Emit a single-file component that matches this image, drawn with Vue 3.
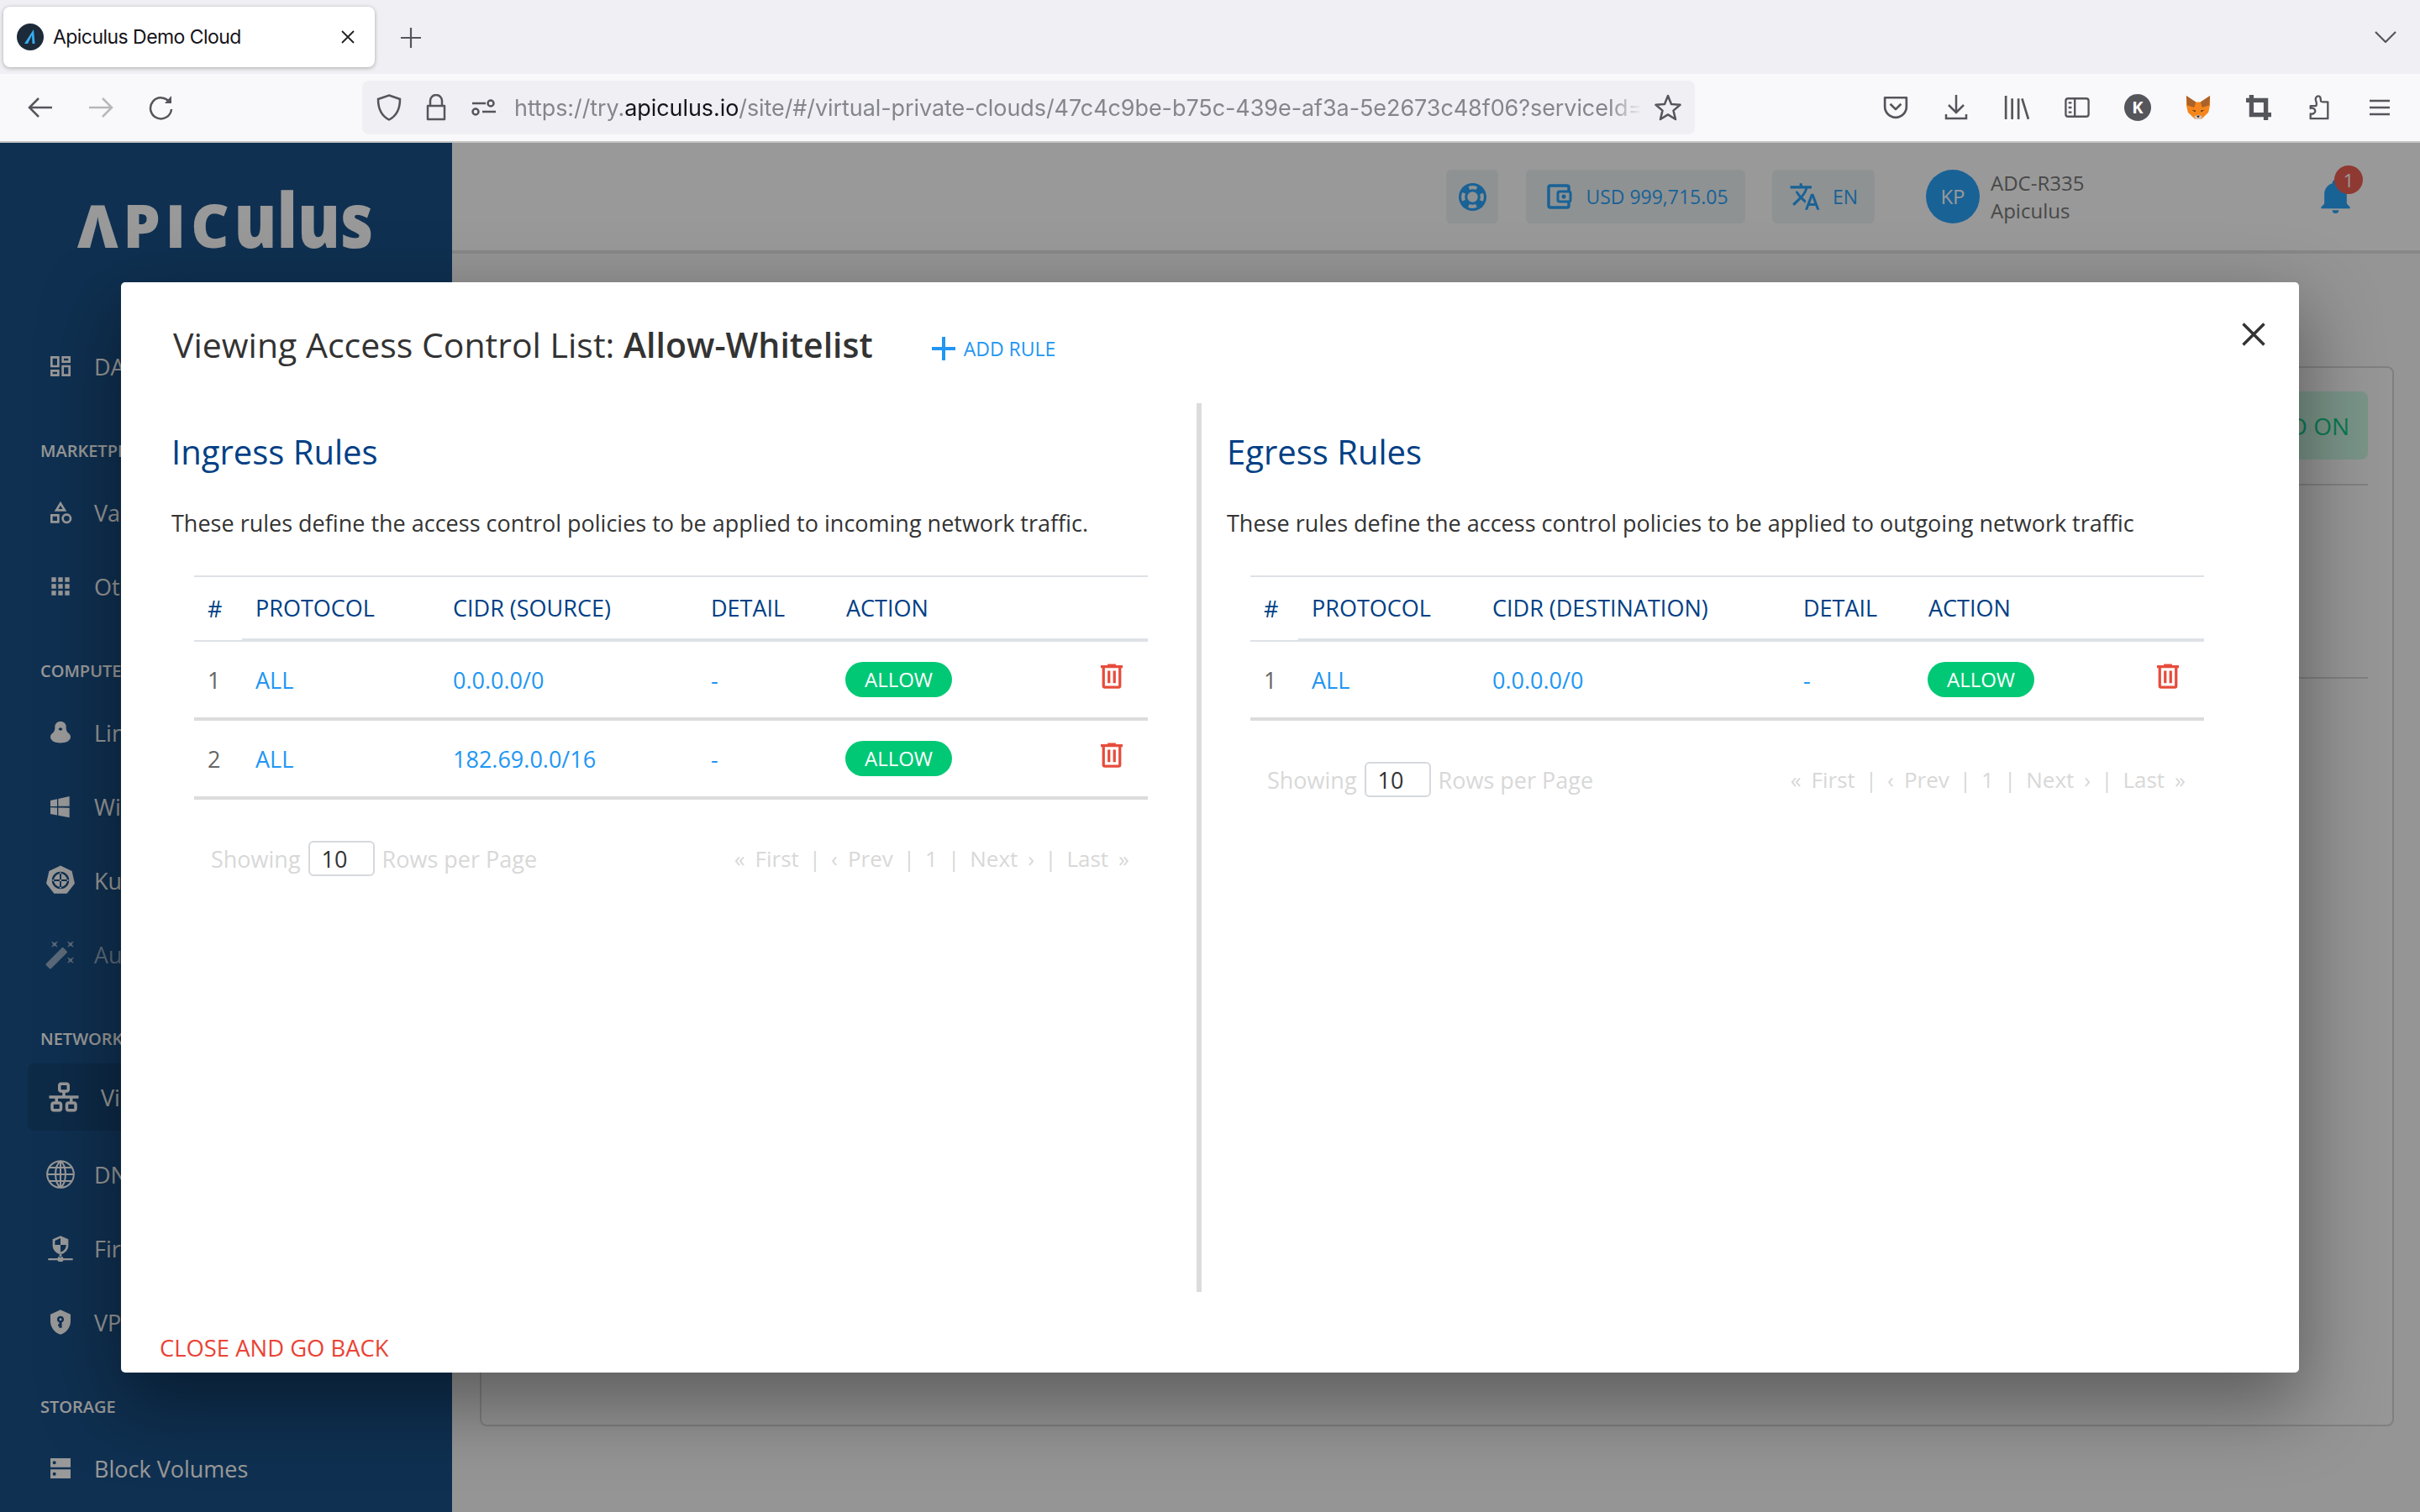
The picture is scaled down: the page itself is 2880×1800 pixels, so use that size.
<script setup>
const ic = {
  dash: 'M19,5V7H15V5H19M9,5V11H5V5H9M19,13V19H15V13H19M9,17V19H5V17H9M21,3H13V9H21V3M11,3H3V13H11V3M21,11H13V21H21V11M11,15H3V21H11V15Z',
  shape: 'M11,13.5V21.5H3V13.5H11M9,15.5H5V19.5H9V15.5M12,2L17.5,11H6.5L12,2M12,5.86L10.08,9H13.92L12,5.86M17.5,13C20,13 22,15 22,17.5C22,20 20,22 17.5,22C15,22 13,20 13,17.5C13,15 15,13 17.5,13M17.5,15A2.5,2.5 0 0,0 15,17.5A2.5,2.5 0 0,0 17.5,20A2.5,2.5 0 0,0 20,17.5A2.5,2.5 0 0,0 17.5,15Z',
  apps: 'M16,20H20V16H16M16,14H20V10H16M10,8H14V4H10M16,8H20V4H16M10,14H14V10H10M4,14H8V10H4M4,20H8V16H4M10,20H14V16H10M4,8H8V4H4V8Z',
  linux: 'M12,2A5,5 0 0,1 17,7V8C17,10 18,11.8 19.5,12.9C20.4,13.6 21,14.8 21,16C21,18 19,20 17.3,20.5C15.5,21.6 8.5,21.6 6.7,20.5C5,20 3,18 3,16C3,14.8 3.6,13.6 4.5,12.9C6,11.8 7,10 7,8V7A5,5 0 0,1 12,2M10,9L12,10.5L14,9L12,7.5L10,9Z',
  windows: 'M3,12V6.75L9,5.43V11.91L3,12M20,3V11.75L10,11.9V5.21L20,3M3,13L9,13.09V19.9L3,18.75V13M20,13.25V22L10,20.09V13.1L20,13.25Z',
  kube: 'M12,1L20.6,5.1L22.7,14.4L16.8,21.9H7.2L1.3,14.4L3.4,5.1L12,1ZM12,5.5A6.5,6.5 0 1,0 12.01,5.5ZM12,7A5,5 0 0,1 17,12A5,5 0 0,1 7,12A5,5 0 0,1 12,7ZM11.4,6V18H12.6V6ZM6,11.4V12.6H18V11.4Z',
  wand: 'M7.5,5.6L5,7L6.4,4.5L5,2L7.5,3.4L10,2L8.6,4.5L10,7L7.5,5.6M19.5,15.4L22,14L20.6,16.5L22,19L19.5,17.6L17,19L18.4,16.5L17,14L19.5,15.4M22,2L20.6,4.5L22,7L19.5,5.6L17,7L18.4,4.5L17,2L19.5,3.4L22,2M14.37,7.29L16.71,9.63C17.1,10 17.1,10.65 16.71,11.04L5.04,22.71C4.65,23.1 4,23.1 3.63,22.71L1.29,20.37C0.9,20 0.9,19.35 1.29,18.96L12.96,7.29C13.35,6.9 14,6.9 14.37,7.29Z',
  lan: 'M10,2C8.89,2 8,2.89 8,4V7C8,8.11 8.89,9 10,9H11V11H2V13H6V15H5C3.89,15 3,15.89 3,17V20C3,21.11 3.89,22 5,22H9C10.11,22 11,21.11 11,20V17C11,15.89 10.11,15 9,15H8V13H16V15H15C13.89,15 13,15.89 13,17V20C13,21.11 13.89,22 15,22H19C20.11,22 21,21.11 21,20V17C21,15.89 20.11,15 19,15H18V13H22V11H13V9H14C15.11,9 16,8.11 16,7V4C16,2.89 15.11,2 14,2H10M10,4H14V7H10V4M5,17H9V20H5V17M15,17H19V20H15V17Z',
  globe: 'M12,2A10,10 0 1,0 12,22A10,10 0 1,0 12,2ZM12,2C7,6 7,18 12,22C17,18 17,6 12,2ZM12,2V22M2,12H22M3.5,7H20.5M3.5,17H20.5',
  firewall: 'M12,1L5,4V9.5C5,13.5 8,16.5 12,17.5C16,16.5 19,13.5 19,9.5V4L12,1ZM12,3V9H17V9.5C17,12 15,14.6 12,15.4V9H7V5.3L12,3ZM11,17H13V20H11ZM1,21H9.5A2.5,1.6 0 0,1 14.5,21H23V22.6H14.5A2.5,1.6 0 0,1 9.5,22.6H1Z',
  vpn: 'M12,1L3,5V11C3,16.5 6.8,21.7 12,23C17.2,21.7 21,16.5 21,11V5L12,1ZM12,6.5A3,3 0 0,1 13.2,12.25V17H10.8V15.5H9.8V13.8H10.8V12.25A3,3 0 0,1 12,6.5ZM12,8.4A1.1,1.1 0 1,0 12.01,8.4Z',
  server: 'M3,3H21V11H3ZM6.5,5.5A1.5,1.5 0 1,0 6.51,5.5ZM3,13H21V21H3ZM6.5,15.5A1.5,1.5 0 1,0 6.51,15.5Z'
}

const sideGroups = [
  { items: [{ name: 'DASHBOARD', icon: ic.dash }] },
  { label: 'MARKETPLACE', items: [{ name: 'Value Packs', icon: ic.shape }, { name: 'Others', icon: ic.apps }] },
  { label: 'COMPUTE', items: [{ name: 'Linux', icon: ic.linux }, { name: 'Windows', icon: ic.windows }, { name: 'Kubernetes', icon: ic.kube, big: true }, { name: 'Autoscale', icon: ic.wand, dim: true, big: true }] },
  { label: 'NETWORK', items: [{ name: 'Virtual Private Clouds', icon: ic.lan, active: true }, { name: 'DNS', icon: ic.globe, stroke: true, big: true }, { name: 'Firewall', icon: ic.firewall }, { name: 'VPN', icon: ic.vpn }] },
  { label: 'STORAGE', items: [{ name: 'Block Volumes', icon: ic.server }] }
]

const panels = [
  {
    title: 'Ingress Rules',
    text: 'These rules define the access control policies to be applied to incoming network traffic.',
    cidr: 'CIDR (SOURCE)',
    cols: [57, 235, 307, 161, 295, 80],
    rows: [
      { n: 1, cidr: '0.0.0.0/0' },
      { n: 2, cidr: '182.69.0.0/16' }
    ]
  },
  {
    title: 'Egress Rules',
    text: 'These rules define the access control policies to be applied to outgoing network traffic',
    cidr: 'CIDR (DESTINATION)',
    cols: [57, 215, 370, 149, 264, 80],
    rows: [{ n: 1, cidr: '0.0.0.0/0' }]
  }
]

const pager = ['«', 'First', '|', '‹', 'Prev', '|', '1', '|', 'Next', '›', '|', 'Last', '»']
</script>

<template>
  <div class="screen">
    <!-- browser chrome -->
    <div class="tabbar">
      <div class="tab">
        <svg class="favicon" viewBox="0 0 32 32">
          <circle cx="16" cy="16" r="16" fill="#1d2a3a" />
          <path d="M9 24L20 7L21.5 24H18.500L18 14L13 24Z" fill="#36aef0" />
        </svg>
        <span class="tab-title">Apiculus Demo Cloud</span>
        <svg class="tab-x" viewBox="0 0 16 16"><path d="M1 1L15 15M15 1L1 15" stroke="#222" stroke-width="1.8" /></svg>
      </div>
      <svg class="newtab" viewBox="0 0 24 24"><path d="M12 0V24M0 12H24" stroke="#55555c" stroke-width="2.2" /></svg>
      <svg class="tabs-chevron" viewBox="0 0 26 14"><path d="M1 1L13 13L25 1" fill="none" stroke="#55555c" stroke-width="2.2" /></svg>
    </div>

    <div class="toolbar">
      <div class="tool">
        <svg viewBox="0 0 30 26"><path d="M29 13H3M13 2L2 13L13 24" class="tl" /></svg>
      </div>
      <div class="tool faded">
        <svg viewBox="0 0 30 26"><path d="M1 13H27M17 2L28 13L17 24" class="tl" /></svg>
      </div>
      <div class="tool">
        <svg viewBox="0 0 30 30"><path d="M25 9A12.5 12.5 0 1 0 27 17" class="tl" /><path d="M19 10H27V1Z" fill="#55555c" /></svg>
      </div>

      <div class="urlbar">
        <svg class="u-shield" viewBox="0 0 30 32"><path d="M15 1.5L28 6C28 18 24 26 15 30.5C6 26 2 18 2 6Z" class="tl" /></svg>
        <svg class="u-lock" viewBox="0 0 24 32"><path d="M5 14V8A7 7 0 0 1 19 8V14M2 14H22V30H2Z" class="tl" stroke-linejoin="round" /></svg>
        <svg class="u-perm" viewBox="0 0 30 20"><path d="M1 5H17M13 15H29" class="tl" /><circle cx="23" cy="5" r="3.5" class="tl" /><circle cx="5" cy="15" r="3.5" class="tl" /></svg>
        <div class="url">https://try.<b>apiculus.io</b>/site/#/virtual-private-clouds/47c4c9be-b75c-439e-af3a-5e2673c48f06?serviceId=</div>
        <svg class="u-star" viewBox="0 0 32 32"><path d="M16 2L20 12L30.5 12.8L22.5 19.6L25 30L16 24.4L7 30L9.5 19.6L1.5 12.8L12 12Z" class="tl" stroke-linejoin="round" /></svg>
      </div>

      <div class="tools-right">
        <div class="tool"><svg viewBox="0 0 28 26"><path d="M2 2H26V12A12 12 0 0 1 2 12ZM8 9L14 15L20 9" class="tl" stroke-linejoin="round" /></svg></div>
        <div class="tool"><svg viewBox="0 0 28 30"><path d="M14 0V20M5 12L14 21L23 12M2 23V28H26V23" class="tl" /></svg></div>
        <div class="tool"><svg viewBox="0 0 28 28"><path d="M2 1V27M9 4V27M16 4V27M20 4L27 27" class="tl" /></svg></div>
        <div class="tool"><svg viewBox="0 0 32 26"><rect x="1.5" y="1.5" width="29" height="23" rx="3" class="tl" /><path d="M13 2V24M5 7H9M5 13H9M5 19H9" class="tl" /></svg></div>
        <div class="tool"><div class="k-badge">K</div></div>
        <div class="tool">
          <svg viewBox="0 0 32 32">
            <path d="M1 1L13 9H19L31 1L31 13L29 22L20 31H12L3 22L1 13Z" fill="#f6851b" />
            <path d="M1 1L13 9L11 16L2 13ZM31 1L19 9L21 16L30 13Z" fill="#a9622a" />
            <path d="M8 19L13 20L12 21.500ZM24 19L19 20L20 21.500Z" fill="#3a2a20" />
            <path d="M11 27L16 25L21 27L20 31H12Z" fill="#d7c1b3" />
            <path d="M14 26.500H18L16 29Z" fill="#161616" />
          </svg>
        </div>
        <div class="tool"><svg viewBox="0 0 28 28"><path d="M6 0V22H28M0 6H22V28" fill="none" stroke="#55555c" stroke-width="5" /></svg></div>
        <div class="tool"><svg viewBox="0 0 26 32"><path d="M2 14H8C10 14 10 10 9 8C7 4 10 1.500 12 1.500C15 1.500 15 5 15 7C15 9 16 9 18 9H24V30H2V24C5 25 8 23 8 20.500C8 18 5 16 2 17Z" class="tl" stroke-linejoin="round" /></svg></div>
        <div class="tool"><svg class="burger" viewBox="0 0 24 20"><path d="M0 2H24M0 10H24M0 18H24" class="tl" /></svg></div>
      </div>
    </div>

    <div class="app">
      <aside class="sidebar">
        <div class="logo"><span class="logo-caps">ΛPIC</span><span class="logo-low">ulus</span></div>
        <div v-for="g in sideGroups" :key="g.label || 'top'" class="side-group">
          <div v-if="g.label" class="side-label">{{ g.label }}</div>
          <div
            v-for="it in g.items"
            :key="it.name"
            class="side-item"
            :class="{ active: it.active, dim: it.dim, big: it.big }"
          >
            <svg class="side-icon" viewBox="0 0 24 24">
              <path v-if="it.stroke" :d="it.icon" fill="none" stroke="currentColor" stroke-width="1.3" />
              <path v-else :d="it.icon" fill="currentColor" fill-rule="evenodd" />
            </svg>
            <span>{{ it.name }}</span>
          </div>
        </div>
      </aside>

      <main class="main">
        <header class="topbar">
          <div class="chip chip-help">
            <svg viewBox="0 0 32 32" class="chip-svg">
              <circle cx="16" cy="16" r="16" fill="currentColor" />
              <circle cx="16" cy="16" r="11" fill="none" stroke="#eef3f5" stroke-width="4" stroke-dasharray="9 8.28" stroke-dashoffset="4.5" />
              <circle cx="16" cy="16" r="6" fill="#eef3f5" />
            </svg>
          </div>
          <div class="chip chip-bal">
            <svg viewBox="0 0 30 32" class="chip-wallet">
              <rect x="2" y="3" width="24" height="26" rx="2" fill="none" stroke="currentColor" stroke-width="3.500" />
              <rect x="13" y="10" width="15" height="12" rx="2" fill="#eef3f5" stroke="currentColor" stroke-width="3" />
              <circle cx="20" cy="16" r="2.500" fill="currentColor" />
            </svg>
            <span>USD 999,715.05</span>
          </div>
          <div class="chip chip-lang">
            <svg viewBox="0 0 24 24" class="chip-trans"><path fill="currentColor" d="M12.87,15.07L10.33,12.56L10.36,12.53C12.1,10.59 13.34,8.36 14.07,6H17V4H10V2H8V4H1V6H12.17C11.5,7.92 10.44,9.75 9,11.35C8.07,10.32 7.3,9.19 6.69,8H4.69C5.42,9.63 6.42,11.17 7.67,12.56L2.58,17.58L4,19L9,14L12.11,17.11L12.87,15.07M18.5,10H16.5L12,22H14L15.12,19H19.87L21,22H23L18.5,10M15.88,17L17.5,12.67L19.12,17H15.88Z" /></svg>
            <span>EN</span>
          </div>
          <div class="user">
            <div class="avatar">KP</div>
            <div class="user-text">
              <div>ADC-R335</div>
              <div>Apiculus</div>
            </div>
          </div>
          <div class="bell">
            <svg viewBox="3 2 18 21"><path fill="currentColor" d="M21,19V20H3V19L5,17V11C5,7.9 7.03,5.17 10,4.29C10,4.19 10,4.1 10,4A2,2 0 0,1 12,2A2,2 0 0,1 14,4C14,4.1 14,4.19 14,4.29C16.97,5.17 19,7.9 19,11V17L21,19M14,21A2,2 0 0,1 12,23A2,2 0 0,1 10,21" /></svg>
            <span class="bell-count">1</span>
          </div>
        </header>

        <section class="card">
          <div class="card-head">
            <button class="addon">ADD ON</button>
          </div>
          <div class="card-line"></div>
        </section>
      </main>
    </div>

    <!-- dialog -->
    <div class="backdrop">
      <div class="modal">
        <div class="modal-head">
          <h1 class="modal-title">Viewing Access Control List: <b>Allow-Whitelist</b></h1>
          <div class="add-rule">
            <svg viewBox="0 0 30 30"><path d="M15 1V29M1 15H29" stroke="currentColor" stroke-width="4" /></svg>
            <span>ADD RULE</span>
          </div>
        </div>
        <svg class="modal-x" viewBox="0 0 28 28"><path d="M1.500 1.500L26.500 26.500M26.500 1.500L1.500 26.500" stroke="#333" stroke-width="3.500" /></svg>

        <div class="panels">
          <section v-for="p in panels" :key="p.title" class="panel">
            <h2 class="panel-title">{{ p.title }}</h2>
            <p class="panel-text">{{ p.text }}</p>
            <table class="rules">
              <colgroup>
                <col v-for="(w, i) in p.cols" :key="i" :style="{ width: w + 'px' }" />
              </colgroup>
              <thead>
                <tr>
                  <th>#</th>
                  <th>PROTOCOL</th>
                  <th>{{ p.cidr }}</th>
                  <th>DETAIL</th>
                  <th>ACTION</th>
                  <th></th>
                </tr>
              </thead>
              <tbody>
                <tr v-for="r in p.rows" :key="r.n">
                  <td class="num">{{ r.n }}</td>
                  <td>ALL</td>
                  <td>{{ r.cidr }}</td>
                  <td>-</td>
                  <td><span class="badge">ALLOW</span></td>
                  <td class="del">
                    <svg viewBox="4 3 16 18"><path fill="#e74c3c" d="M9,3V4H4V6H5V19A2,2 0 0,0 7,21H17A2,2 0 0,0 19,19V6H20V4H15V3H9M7,6H17V19H7V6M9,8V17H11V8H9M13,8V17H15V8H13Z" /></svg>
                  </td>
                </tr>
              </tbody>
            </table>
            <div class="paging">
              <div class="per-page">
                <span>Showing</span>
                <span class="size-box">10</span>
                <span>Rows per Page</span>
              </div>
              <div class="pager">
                <span v-for="(t, i) in pager" :key="i">{{ t }}</span>
              </div>
            </div>
          </section>
        </div>

        <div class="modal-foot">CLOSE AND GO BACK</div>
      </div>
    </div>
  </div>
</template>

<style scoped>
.screen {
  position: relative;
  width: 2880px;
  height: 1800px;
  overflow: hidden;
  display: flex;
  flex-direction: column;
  font-family: "Open Sans", "Noto Sans", sans-serif;
  color: #333;
}

/* browser chrome */
.tabbar {
  height: 88px;
  background: #f0f0f4;
  display: flex;
  align-items: flex-start;
  flex: none;
}
.tab {
  margin: 8px 0 0 4px;
  width: 442px;
  height: 72px;
  box-sizing: border-box;
  padding: 0 24px 0 16px;
  background: #fff;
  border-radius: 8px;
  box-shadow: 0 1px 5px rgba(0, 0, 0, 0.3);
  display: flex;
  align-items: center;
}
.favicon {
  width: 32px;
  height: 32px;
  flex: none;
}
.tab-title {
  margin-left: 11px;
  flex: 1;
  font: 23px "Inter", "Liberation Sans", sans-serif;
  letter-spacing: -0.55px;
  color: #15141a;
  white-space: nowrap;
}
.tab-x {
  width: 16px;
  height: 16px;
}
.newtab {
  width: 24px;
  height: 24px;
  margin: 33px 0 0 31px;
}
.tabs-chevron {
  width: 26px;
  height: 14px;
  margin: 37px 28px 0 auto;
}
.toolbar {
  height: 80px;
  background: #f9f9fb;
  display: flex;
  align-items: center;
  padding: 0 32px;
  gap: 40px;
  flex: none;
  border-bottom: 2px solid #c4c4c4;
}
.tool {
  width: 32px;
  height: 32px;
  display: flex;
  align-items: center;
  justify-content: center;
  flex: none;
}
.tool svg {
  width: 30px;
  height: 30px;
}
.tool svg.burger {
  width: 24px;
  height: 20px;
}
.tool.faded {
  opacity: 0.4;
}
.tl {
  fill: none;
  stroke: #55555c;
  stroke-width: 2.500;
}
.urlbar {
  margin-left: 183px;
  width: 1586px;
  height: 64px;
  box-sizing: border-box;
  background: #f0f0f4;
  border-radius: 8px;
  display: flex;
  align-items: center;
  padding-left: 17px;
  flex: none;
}
.u-shield {
  width: 30px;
  height: 32px;
}
.u-lock {
  width: 24px;
  height: 32px;
  margin-left: 29px;
}
.u-perm {
  width: 30px;
  height: 20px;
  margin-left: 30px;
}
.url {
  margin-left: 21px;
  width: 1342px;
  overflow: hidden;
  white-space: nowrap;
  font: 27px "Inter", "Liberation Sans", sans-serif;
  letter-spacing: -0.08px;
  color: #85858c;
  -webkit-mask-image: linear-gradient(90deg, #000 97%, transparent);
  mask-image: linear-gradient(90deg, #000 97%, transparent);
}
.url b {
  font-weight: 400;
  color: #15141a;
}
.u-star {
  width: 32px;
  height: 32px;
  margin-left: 15px;
}
.tools-right {
  margin-left: auto;
  display: flex;
  gap: 40px;
}
.k-badge {
  width: 32px;
  height: 32px;
  border-radius: 50%;
  background: #55555c;
  color: #fff;
  font: 700 20px/32px "Open Sans", sans-serif;
  text-align: center;
}

/* app behind the dialog */
.app {
  flex: 1;
  display: flex;
  min-height: 0;
}
.sidebar {
  width: 538px;
  flex: none;
  background: #1a5088;
  color: #fff;
  box-sizing: border-box;
}
.logo {
  margin: 58px 0 73px 92px;
  height: 91px;
  display: flex;
  align-items: baseline;
  font-weight: 800;
  line-height: 1;
  white-space: nowrap;
}
.logo-caps {
  font-size: 70px;
  letter-spacing: 6px;
}
.logo-low {
  display: inline-block;
  font-size: 76px;
  letter-spacing: 0;
  transform: scaleY(1.2);
  transform-origin: 0 88.8%;
}
.side-group {
  margin-bottom: 43px;
}
.side-label {
  margin: 0 0 15px 48px;
  font-size: 20px;
  font-weight: 600;
  line-height: 28px;
}
.side-item {
  height: 88px;
  box-sizing: border-box;
  display: flex;
  align-items: center;
  padding-left: 56px;
  font-size: 27px;
  white-space: nowrap;
}
.side-item.dim {
  opacity: 0.55;
}
.side-item.active {
  margin: 0 0 8px 33px;
  padding-left: 22px;
  height: 80px;
  background: #174677;
  border-radius: 8px;
}
.side-icon {
  width: 32px;
  height: 32px;
  margin-right: 24px;
  flex: none;
}
.side-item.big .side-icon {
  width: 38px;
  height: 38px;
  margin-left: -3px;
  margin-right: 21px;
}
.side-item.active .side-icon {
  width: 42px;
  height: 42px;
  margin-right: 23px;
}
.main {
  flex: 1;
  background: #f8f8f8;
  min-width: 0;
}
.topbar {
  height: 128px;
  box-sizing: content-box;
  background: #fff;
  border-bottom: 4px solid #e3e3e3;
  display: flex;
  align-items: center;
  padding: 0 83px 0 1183px;
}
.chip {
  height: 64px;
  background: #eef3f5;
  border-radius: 6px;
  display: flex;
  align-items: center;
  justify-content: center;
  color: #2ba3fa;
  font-size: 23px;
  flex: none;
}
.chip-help {
  width: 62px;
}
.chip-svg {
  width: 33px;
  height: 33px;
}
.chip-bal {
  width: 261px;
  margin-left: 33px;
  box-sizing: border-box;
  padding-left: 5px;
}
.chip-wallet {
  width: 30px;
  height: 32px;
  margin-right: 16px;
}
.chip-lang {
  width: 122px;
  margin-left: 32px;
}
.chip-trans {
  width: 38px;
  height: 38px;
  margin-right: 14px;
}
.user {
  margin-left: 61px;
  width: 470px;
  display: flex;
  align-items: center;
}
.avatar {
  width: 64px;
  height: 64px;
  border-radius: 50%;
  background: #2ba3fa;
  color: #fff;
  font-size: 24px;
  line-height: 64px;
  text-align: center;
}
.user-text {
  margin-left: 13px;
  color: #787878;
  font-size: 24px;
  line-height: 33px;
}
.bell {
  position: relative;
  width: 35px;
  height: 40px;
  color: #2ba3fa;
}
.bell svg {
  width: 35px;
  height: 40px;
  display: block;
}
.bell-count {
  position: absolute;
  left: 16px;
  top: -17px;
  width: 34px;
  height: 34px;
  border-radius: 50%;
  background: #ee5f55;
  color: #fff;
  font-size: 22px;
  line-height: 34px;
  text-align: center;
}
.card {
  margin: 134px 31px 0 33px;
  height: 1262px;
  box-sizing: border-box;
  background: #fbfbfb;
  border: 2px solid #d6d6d6;
  border-radius: 8px;
  padding: 28px 29px;
}
.card-head {
  display: flex;
  justify-content: flex-end;
  padding-bottom: 29px;
  border-bottom: 2px solid #d5d5d5;
}
.addon {
  height: 81px;
  border: 0;
  border-radius: 8px;
  background: #cbf7e3;
  color: #12cc89;
  font: 28px "Open Sans", sans-serif;
  padding: 0 22px 0 60px;
}
.card-line {
  margin-top: 228px;
  border-top: 2px solid #d5d5d5;
}

/* dialog */
.backdrop {
  position: absolute;
  left: 0;
  right: 0;
  top: 170px;
  bottom: 0;
  background: rgba(0, 0, 0, 0.4);
}
.modal {
  position: absolute;
  left: 144px;
  top: 166px;
  width: 2592px;
  height: 1298px;
  background: #fff;
  border-radius: 5px;
  display: flex;
  flex-direction: column;
  box-shadow: 0 34px 90px 6px rgba(0, 0, 0, 0.38);
}
.modal-head {
  height: 144px;
  flex: none;
  display: flex;
  align-items: center;
  padding: 4px 0 0 62px;
  box-sizing: border-box;
}
.modal-title {
  margin: 0;
  font-size: 41px;
  font-weight: 400;
  color: #333;
  white-space: nowrap;
}
.modal-title b {
  font-weight: 600;
}
.add-rule {
  margin-left: 69px;
  display: flex;
  align-items: center;
  color: #2196f3;
  font-size: 23px;
  padding-top: 10px;
}
.add-rule svg {
  width: 30px;
  height: 30px;
  margin-right: 9px;
}
.modal-x {
  position: absolute;
  right: 40px;
  top: 48px;
  width: 28px;
  height: 28px;
}
.panels {
  display: grid;
  grid-template-columns: 1280px 1fr;
  height: 1058px;
  flex: none;
}
.panel {
  box-sizing: border-box;
  padding-left: 60px;
}
.panel + .panel {
  border-left: 6px solid #dcdcdc;
  padding-left: 30px;
}
.panel-title {
  margin: 30px 0 0;
  font-size: 40px;
  font-weight: 400;
  line-height: 56px;
  color: #004085;
}
.panel-text {
  margin: 37px 0 0;
  font-size: 27px;
  line-height: 40px;
  color: #333;
  white-space: nowrap;
}
.rules {
  margin: 42px 0 0 27px;
  width: 1135px;
  table-layout: fixed;
  border-collapse: separate;
  border-spacing: 0;
  border-top: 2px solid #dee2e6;
  font-size: 27px;
}
.panel + .panel .rules {
  margin-left: 28px;
}
.rules th {
  height: 77px;
  padding: 0 0 0 16px;
  text-align: left;
  font-weight: 400;
  color: #004085;
  border-bottom: 4px solid #dee2e6;
  box-sizing: border-box;
  white-space: nowrap;
}
.rules th:first-child {
  border-bottom-width: 2px;
}
.rules td {
  height: 94px;
  padding: 0 0 0 16px;
  box-sizing: border-box;
  color: #2196f3;
  border-bottom: 4px solid #dcdcdc;
  white-space: nowrap;
}
.rules td.num {
  color: #666;
}
.badge {
  display: inline-block;
  width: 127px;
  height: 42px;
  margin-left: -1px;
  border-radius: 21px;
  background: #00c875;
  color: #fff;
  font-size: 24px;
  line-height: 42px;
  text-align: center;
}
.rules td.del {
  padding: 0 30px 14px 0;
  text-align: right;
}
.del svg {
  width: 26px;
  height: 30px;
  display: inline-block;
  vertical-align: middle;
}
.paging {
  margin: 49px 0 0 27px;
  width: 1135px;
  display: flex;
  justify-content: space-between;
  align-items: center;
  box-sizing: border-box;
  padding: 0 22px 0 20px;
  color: #d8d8d8;
  font-size: 27px;
  white-space: nowrap;
}
.panel + .panel .paging {
  margin-left: 28px;
}
.per-page {
  display: flex;
  align-items: center;
  gap: 9px;
}
.size-box {
  width: 79px;
  height: 42px;
  box-sizing: border-box;
  border: 2px solid #d5d8dd;
  border-radius: 6px;
  color: #333;
  padding-left: 14px;
  line-height: 40px;
}
.pager {
  display: flex;
  gap: 12px;
  font-size: 26px;
}
.modal-foot {
  margin: 47px 0 0 46px;
  font-size: 27.4px;
  line-height: 40px;
  color: #ea4335;
}
</style>

<style>
html, body {
  margin: 0;
  background: #999;
  overflow: hidden;
}
</style>
